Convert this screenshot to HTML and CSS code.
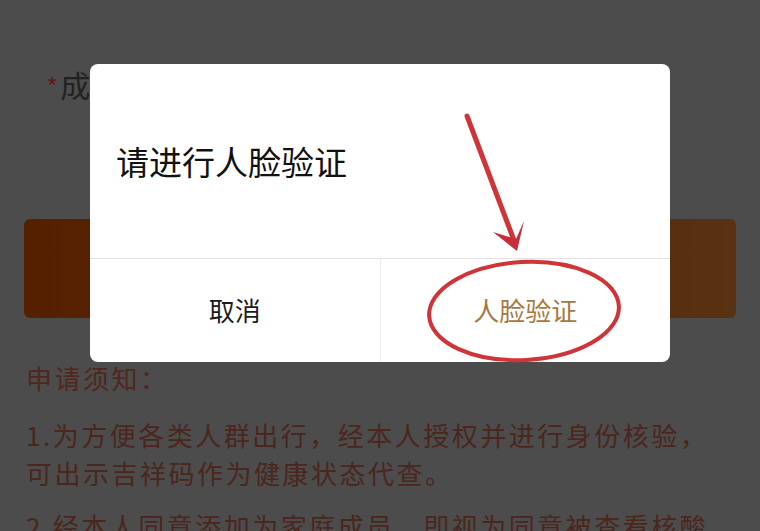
FILE: index.html
```html
<!DOCTYPE html>
<html lang="zh-CN">
  <head>
    <title>成员添加</title>
    <meta charset="utf-8" />
    <meta name="viewport" content="width=device-width" />
    <link rel="stylesheet" href="styles.css">
  </head>
  <body>
    <div class="page">
      <div class="fieldLabel"><span class="required">*</span>成员姓名</div>
      <div class="submitBtn"></div>
      <h4 class="noticeTitle">申请须知：</h4>
      <p class="notice">1.为方便各类人群出行，经本人授权并进行身份核验，可出示吉祥码作为健康状态代查。</p>
      <p class="notice">2.经本人同意添加为家庭成员，即视为同意被查看核酸检测结果。</p>
    </div>

    <div class="dialog">
      <div class="dialogTitle">请进行人脸验证</div>
      <div class="dialogBtns">
        <div class="dialogBtn cancel">取消</div>
        <div class="dialogBtn confirm">人脸验证</div>
      </div>
    </div>

    <!-- red hand-drawn marks over the screenshot -->
    <svg class="marks" width="760" height="531" viewBox="0 0 760 531">
      <line x1="467" y1="116" x2="515" y2="243" stroke="#cf3438" stroke-width="5" stroke-linecap="round" />
      <path d="M493 232 L517 251 L524 221 L516 239 Z" fill="#c4303a" />
      <ellipse cx="524" cy="311" rx="95" ry="49" fill="none" stroke="#d03438" stroke-width="4" transform="rotate(-3 524 311)" />
    </svg>
  </body>
</html>
```

FILE: styles.css
```css
html,
body {
  margin: 0;
  padding: 0;
}
body {
  width: 760px;
  height: 531px;
  overflow: hidden;
  position: relative;
  background-color: #4c4c4c;
  font-family: "Noto Sans CJK SC", "Noto Sans", sans-serif;
}

/* page behind the dimmed overlay */
.page {
  padding: 0 24px;
}
.fieldLabel {
  padding-top: 64px;
  padding-left: 22px;
  font-size: 30px;
  line-height: 40px;
  color: #222;
}
.required {
  color: #5e1c1c;
  font-size: 26px;
  margin-right: 2px;
}
.submitBtn {
  margin-top: 113px;
  height: 99px;
  border-radius: 6px;
  background: linear-gradient(90deg, #552000, #582606 50%, #583211);
}
.noticeTitle {
  margin: 41px 0 19px 2px;
  font-size: 26px;
  font-weight: normal;
  line-height: 38px;
  letter-spacing: 2.5px;
  color: #51271c;
}
.notice {
  margin: 0 0 15px 2px;
  width: 690px;
  font-size: 26px;
  line-height: 38px;
  letter-spacing: 2.5px;
  color: #4b261c;
}

/* modal */
.dialog {
  position: absolute;
  left: 90px;
  top: 64px;
  width: 580px;
  height: 298px;
  background-color: #fff;
  border-radius: 8px;
  display: flex;
  flex-direction: column;
}
.dialogTitle {
  height: 194px;
  display: flex;
  align-items: center;
  padding-left: 26px;
  font-size: 33px;
  color: #111;
}
.dialogBtns {
  flex: 1;
  display: flex;
  border-top: 1px solid #e3e3e3;
}
.dialogBtn {
  flex: 1;
  display: flex;
  align-items: center;
  justify-content: center;
  font-size: 26px;
  padding-bottom: 2px;
}
.cancel {
  color: #1c1c1c;
  border-right: 1px solid #ececec;
}
.confirm {
  color: #a9783f;
}

.marks {
  position: absolute;
  left: 0;
  top: 0;
  pointer-events: none;
}
```
